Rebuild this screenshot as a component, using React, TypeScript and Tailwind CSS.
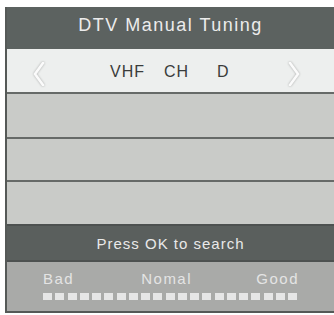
const SQUARES = Array.from({ length: 21 }, (_, i) => i);

function Chevron({ dir }: { dir: "left" | "right" }) {
  const d = dir === "left" ? "M10 1 L2 12 L10 23" : "M2 1 L10 12 L2 23";
  return (
    <svg width="12" height="24" viewBox="0 0 12 24" className="drop-shadow-[0_0_1px_rgba(0,0,0,0.3)]">
      <path d={d} fill="none" stroke="#fbfbfb" strokeWidth="2.6" strokeLinecap="round" strokeLinejoin="round" />
    </svg>
  );
}

export default function App() {
  return (
    <div className="h-[315px] w-[334px] overflow-hidden bg-white pt-[7px] pl-[5px] font-['Liberation_Sans',Arial,sans-serif]">
      <div className="w-[329px] border-b-2 border-l-2 border-[#555957]">
        {/* title */}
        <div className="flex h-[42px] items-center justify-center bg-[#5c6260] pb-[6px] text-[18px] tracking-[1.5px] text-[#ececec]">
          DTV Manual Tuning
        </div>

        {/* band selector */}
        <div className="relative flex h-[45px] items-center border-b-2 border-[#666a68] bg-[#edefee] pt-[2px] text-[16px] tracking-[1px] text-[#3a3c3b]">
          <span className="absolute left-[26px] top-[13px]">
            <Chevron dir="left" />
          </span>
          <span className="ml-[103px]">VHF</span>
          <span className="ml-[19px]">CH</span>
          <span className="ml-[28px]">D</span>
          <span className="absolute left-[281px] top-[13px]">
            <Chevron dir="right" />
          </span>
        </div>

        <div className="h-[45px] border-b-2 border-[#666a68] bg-[#c9cbc8]" />
        <div className="h-[43px] border-b-2 border-[#666a68] bg-[#c9cbc8]" />
        <div className="h-[42px] bg-[#c9cbc8]" />

        {/* hint */}
        <div className="flex h-[38px] items-center justify-center border-y-2 border-[#4d5150] bg-[#5a5f5d] pt-[2px] text-[15px] tracking-[1px] text-[#e9e9e9]">
          Press OK to search
        </div>

        {/* signal */}
        <div className="h-[49px] bg-[#a9aaa8] pl-[36px] pt-[9px] text-[15px] tracking-[1.5px] text-[#e4e4e4]">
          <div className="flex w-[256px] items-center leading-none">
            <span>Bad</span>
            <span className="ml-[67px]">Nomal</span>
            <span className="ml-auto">Good</span>
          </div>
          <div className="mt-[7px] flex w-[254px] justify-between">
            {SQUARES.map((i) => (
              <span key={i} className="h-[7px] w-[9px] bg-[#e6e6e6]" />
            ))}
          </div>
        </div>
      </div>
    </div>
  );
}
